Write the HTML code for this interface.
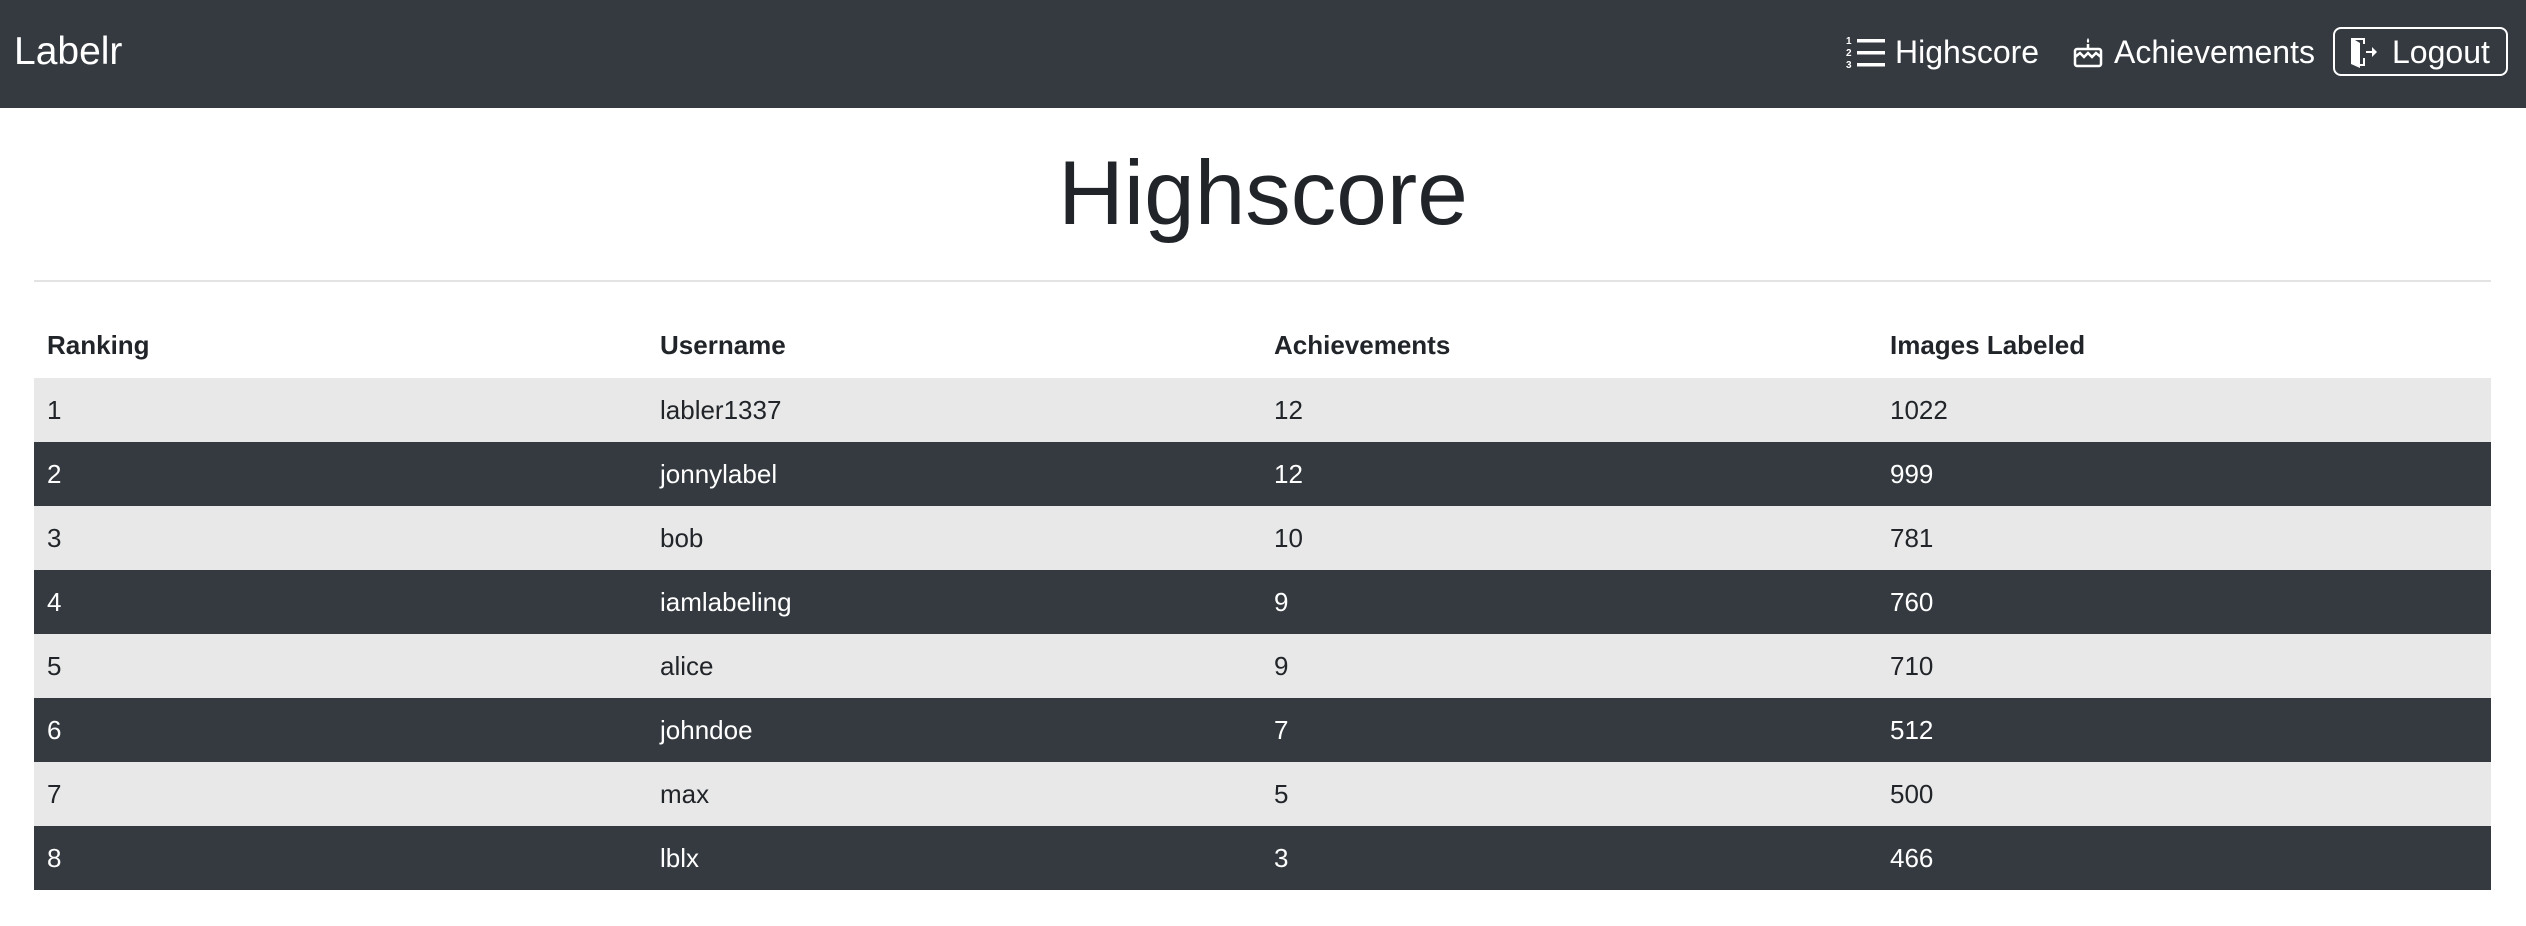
<!DOCTYPE html>
<html><head><meta charset="utf-8"><style>
*{margin:0;padding:0;box-sizing:border-box}
body{width:2526px;height:926px;background:#fff;font-family:"Liberation Sans",sans-serif;color:#212529;position:relative;overflow:hidden}
.nav{position:absolute;left:0;top:0;width:2526px;height:108px;background:#343a40}
.abs{position:absolute;white-space:nowrap}
.brand{left:14px;top:29px;font-size:39px;color:#fff;line-height:46px}
.nl{font-size:32px;color:#fff;line-height:40px;top:32px}
.btn{left:2333px;top:27px;width:175px;height:49px;border:2px solid #fff;border-radius:8px}
h1{position:absolute;left:0;width:2526px;text-align:center;font-weight:400;font-size:91px;line-height:91px;top:148px;color:#212529}
.hr{position:absolute;left:34px;top:280px;width:2457px;height:2px;background:#e3e3e3}
.row{position:absolute;left:34px;width:2457px;height:64px;font-size:26px;line-height:64px}
.row span{position:absolute;top:0}
.l{background:#e8e8e8;color:#212529}
.d{background:#343a40;color:#fff}
.h{font-weight:bold;color:#212529}
</style></head><body>
<div class="nav"></div>
<div class="abs brand">Labelr</div>
<svg class="abs" style="left:1846px;top:35px" width="40" height="34" viewBox="0 0 40 34" fill="#fff">
<text x="0" y="9" font-size="10" font-family="Liberation Sans" fill="#fff" font-weight="bold">1</text>
<text x="0" y="21" font-size="10" font-family="Liberation Sans" fill="#fff" font-weight="bold">2</text>
<text x="0" y="33" font-size="10" font-family="Liberation Sans" fill="#fff" font-weight="bold">3</text>
<rect x="11" y="4" width="28" height="3.5"/><rect x="11" y="16" width="28" height="3.5"/><rect x="11" y="28" width="28" height="3.5"/>
</svg>
<div class="abs nl" style="left:1895px">Highscore</div>
<svg class="abs" style="left:2073px;top:36px" width="30" height="32" viewBox="0 0 30 32" fill="none" stroke="#fff" stroke-width="2.5">
<path d="M15 2c-1.5 2-1.5 4 0 5c1.5-1 1.5-3 0-5z" fill="#fff" stroke="none"/>
<line x1="15" y1="8" x2="15" y2="13"/>
<rect x="2" y="13" width="26" height="17" rx="2"/>
<path d="M2 21l5-4 4 4 4-4 4 4 4-4 5 4"/>
</svg>
<div class="abs nl" style="left:2114px">Achievements</div>
<div class="abs btn"></div>
<svg class="abs" style="left:2348px;top:36px" width="30" height="32" viewBox="0 0 30 32" fill="#fff">
<path d="M3 2h14v6h-2V4H7l5 3v21h3v-6h2v8h-5v2L3 28z"/>
<path d="M18 15h6v-4l5 5-5 5v-4h-6z"/>
</svg>
<div class="abs nl" style="left:2392px">Logout</div>
<h1>Highscore</h1>
<div class="hr"></div>
<div class="row h" style="top:313px"><span style="left:13px">Ranking</span><span style="left:626px">Username</span><span style="left:1240px">Achievements</span><span style="left:1856px">Images Labeled</span></div>
<div class="row l" style="top:378px"><span style="left:13px">1</span><span style="left:626px">labler1337</span><span style="left:1240px">12</span><span style="left:1856px">1022</span></div>
<div class="row d" style="top:442px"><span style="left:13px">2</span><span style="left:626px">jonnylabel</span><span style="left:1240px">12</span><span style="left:1856px">999</span></div>
<div class="row l" style="top:506px"><span style="left:13px">3</span><span style="left:626px">bob</span><span style="left:1240px">10</span><span style="left:1856px">781</span></div>
<div class="row d" style="top:570px"><span style="left:13px">4</span><span style="left:626px">iamlabeling</span><span style="left:1240px">9</span><span style="left:1856px">760</span></div>
<div class="row l" style="top:634px"><span style="left:13px">5</span><span style="left:626px">alice</span><span style="left:1240px">9</span><span style="left:1856px">710</span></div>
<div class="row d" style="top:698px"><span style="left:13px">6</span><span style="left:626px">johndoe</span><span style="left:1240px">7</span><span style="left:1856px">512</span></div>
<div class="row l" style="top:762px"><span style="left:13px">7</span><span style="left:626px">max</span><span style="left:1240px">5</span><span style="left:1856px">500</span></div>
<div class="row d" style="top:826px"><span style="left:13px">8</span><span style="left:626px">lblx</span><span style="left:1240px">3</span><span style="left:1856px">466</span></div>
</body></html>
